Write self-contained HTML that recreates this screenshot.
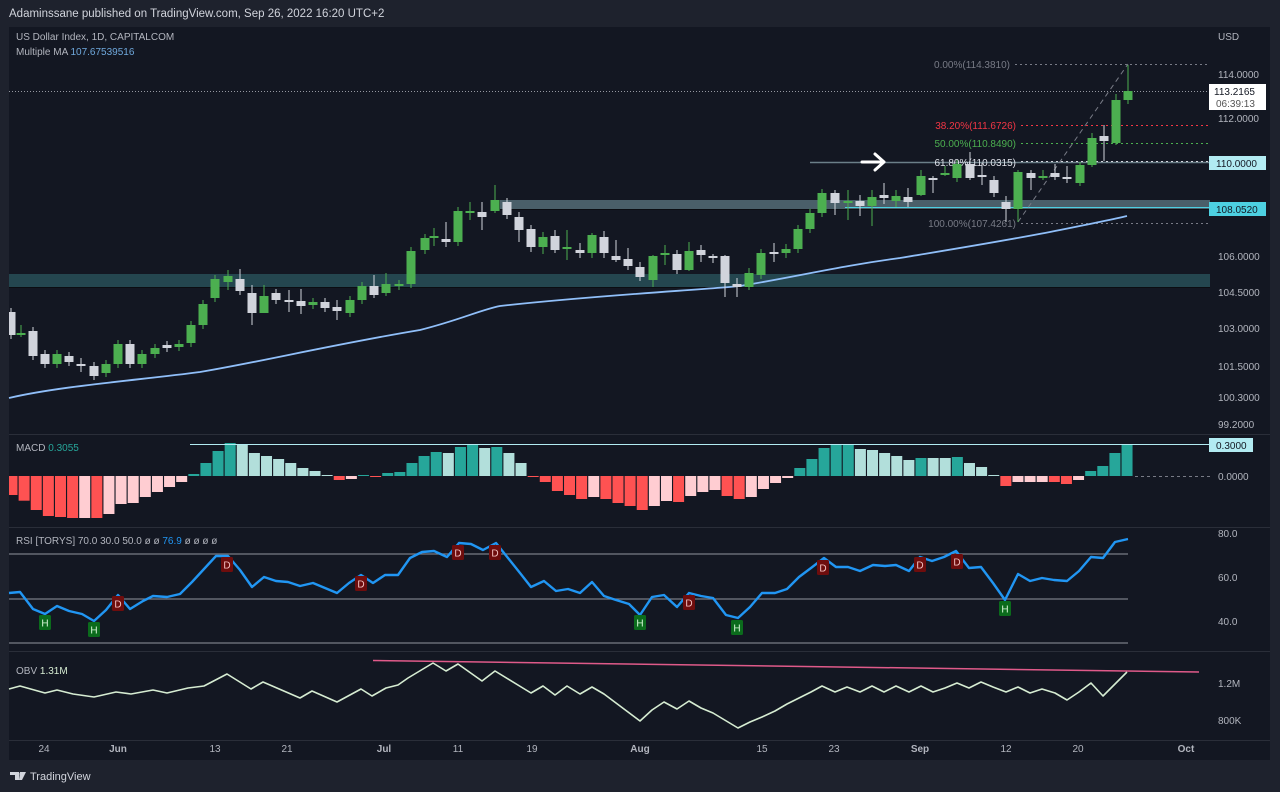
<!DOCTYPE html>
<html><head><meta charset="utf-8"><style>
html,body{margin:0;padding:0;background:#1e222d;width:1280px;height:792px;overflow:hidden;font-family:"Liberation Sans",sans-serif}
svg{position:absolute;left:0;top:0}
text{font-family:"Liberation Sans",sans-serif}
</style></head><body>
<svg id="s" width="1280" height="792" xmlns="http://www.w3.org/2000/svg">
<defs><clipPath id="cp"><rect x="9" y="27" width="1261" height="733"/></clipPath></defs>
<rect x="0" y="0" width="1280" height="792" fill="#1e222d"/>
<text x="9" y="17" font-size="11.5" fill="#d1d4dc">Adaminssane published on TradingView.com, Sep 26, 2022 16:20 UTC+2</text>
<rect x="9" y="27" width="1261" height="733" fill="#131722"/>
<g stroke="#2a2e39" stroke-width="1">
<line x1="9" y1="434.5" x2="1270" y2="434.5"/>
<line x1="9" y1="527.5" x2="1270" y2="527.5"/>
<line x1="9" y1="651.5" x2="1270" y2="651.5"/>
<line x1="9" y1="740.5" x2="1270" y2="740.5"/>
</g>
<rect x="9" y="274" width="1201" height="13" fill="#24464f"/>
<line x1="9" y1="287.5" x2="1210" y2="287.5" stroke="#0b0d12"/>
<rect x="500" y="200" width="710" height="9" fill="#4a5f69"/>
<line x1="500" y1="209.5" x2="1210" y2="209.5" stroke="#0b0d12"/>
<line x1="845" y1="207.5" x2="1210" y2="207.5" stroke="#4dd0e1" stroke-width="1"/>
<line x1="810" y1="162.5" x2="1210" y2="162.5" stroke="#6b7f88" stroke-width="1.5"/>
<line x1="9" y1="91.5" x2="1210" y2="91.5" stroke="#9598a1" stroke-dasharray="1 2"/>
<g stroke-dasharray="2 3" stroke-width="1">
<line x1="1015" y1="64.5" x2="1210" y2="64.5" stroke="#787b86"/>
<line x1="1021" y1="125.5" x2="1210" y2="125.5" stroke="#f23645"/>
<line x1="1021" y1="143.5" x2="1210" y2="143.5" stroke="#4caf50"/>
<line x1="1021" y1="161.5" x2="1210" y2="161.5" stroke="#d1d4dc"/>
<line x1="1021" y1="223.5" x2="1210" y2="223.5" stroke="#787b86"/>
<line x1="1018" y1="222" x2="1128" y2="64" stroke="#787b86" stroke-dasharray="5 4"/>
</g>
<g font-size="10" text-anchor="end">
<text x="1010" y="68" fill="#787b86">0.00%(114.3810)</text>
<text x="1016" y="129" fill="#f23645">38.20%(111.6726)</text>
<text x="1016" y="147" fill="#4caf50">50.00%(110.8490)</text>
<text x="1016" y="166" fill="#e0e3eb">61.80%(110.0315)</text>
<text x="1016" y="227" fill="#787b86">100.00%(107.4261)</text>
</g>
<path d="M862 162 H884 M875 154 L884 162 L875 170" stroke="#fff" stroke-width="3" fill="none" stroke-linecap="round" stroke-linejoin="round"/>
<path d="M9 398 C60 386 140 380 200 372 C260 362 330 345 420 330 C460 320 480 310 500 306 C600 295 700 290 740 286 C800 276 840 266 900 258 C960 248 1010 240 1060 230 C1090 224 1110 220 1127 216" stroke="#90bff9" stroke-width="1.8" fill="none"/>
<g id="candles" clip-path="url(#cp)"></g>
<g id="macd" clip-path="url(#cp)"></g>
<line x1="190" y1="444.5" x2="1210" y2="444.5" stroke="#b2ebf2" stroke-width="1"/>
<line x1="1135" y1="476.5" x2="1210" y2="476.5" stroke="#787b86" stroke-dasharray="3 3"/>
<g stroke="#787b86" stroke-width="1.2">
<line x1="9" y1="554" x2="1128" y2="554"/><line x1="9" y1="599" x2="1128" y2="599"/><line x1="9" y1="643" x2="1128" y2="643"/>
</g>
<path id="rsi" stroke="#2196f3" stroke-width="2.4" fill="none" stroke-linejoin="round"/>
<g id="marks"></g>
<line x1="373" y1="660.5" x2="1199" y2="672" stroke="#e05a8a" stroke-width="1.5"/>
<path id="obv" stroke="#d6ecd2" stroke-width="1.6" fill="none" stroke-linejoin="round"/>
<g font-size="10" fill="#b2b5be">
<text x="16" y="40">US Dollar Index, 1D, CAPITALCOM</text>
<text x="16" y="55">Multiple MA <tspan fill="#6fa8dc">107.67539516</tspan></text>
<text x="16" y="451">MACD <tspan fill="#26a69a">0.3055</tspan></text>
<text x="16" y="544">RSI [TORYS]  70.0  30.0  50.0  ø  ø  <tspan fill="#2196f3">76.9</tspan>  ø  ø  ø  ø</text>
<text x="16" y="674">OBV <tspan fill="#d6ecd2">1.31M</tspan></text>
</g>
<g font-size="10" fill="#b2b5be">
<text x="1218" y="40">USD</text>
<text x="1218" y="78">114.0000</text>
<text x="1218" y="122">112.0000</text>
<text x="1218" y="260">106.0000</text>
<text x="1218" y="296">104.5000</text>
<text x="1218" y="332">103.0000</text>
<text x="1218" y="370">101.5000</text>
<text x="1218" y="401">100.3000</text>
<text x="1218" y="428">99.2000</text>
<text x="1218" y="480">0.0000</text>
<text x="1218" y="537">80.0</text>
<text x="1218" y="581">60.0</text>
<text x="1218" y="625">40.0</text>
<text x="1218" y="687">1.2M</text>
<text x="1218" y="724">800K</text>
</g>
<rect x="1209" y="84" width="57" height="26" fill="#fff"/>
<text x="1214" y="95" font-size="10" fill="#131722">113.2165</text>
<text x="1216" y="107" font-size="10" fill="#555">06:39:13</text>
<rect x="1209" y="156" width="57" height="14" fill="#b2ebf2"/>
<text x="1216" y="167" font-size="10" fill="#131722">110.0000</text>
<rect x="1209" y="202" width="57" height="14" fill="#4dd0e1"/>
<text x="1216" y="213" font-size="10" fill="#131722">108.0520</text>
<rect x="1209" y="438" width="44" height="14" fill="#b2ebf2"/>
<text x="1216" y="449" font-size="10" fill="#131722">0.3000</text>
<g font-size="10" fill="#b2b5be" text-anchor="middle">
<text x="44" y="752">24</text><text x="118" y="752" font-weight="bold">Jun</text><text x="215" y="752">13</text><text x="287" y="752">21</text>
<text x="384" y="752" font-weight="bold">Jul</text><text x="458" y="752">11</text><text x="532" y="752">19</text><text x="640" y="752" font-weight="bold">Aug</text>
<text x="762" y="752">15</text><text x="834" y="752">23</text><text x="920" y="752" font-weight="bold">Sep</text><text x="1006" y="752">12</text>
<text x="1078" y="752">20</text><text x="1186" y="752" font-weight="bold">Oct</text>
</g>
<path d="M10 772 H19 V780 H15 V775 H10 Z M20 772 H26 L22 780 H19 Z" fill="#d1d4dc"/>
<circle cx="21" cy="774" r="1.6" fill="#d1d4dc"/>
<text x="30" y="780" font-size="11" fill="#d1d4dc">TradingView</text>
</svg>
<script>
var NS="http://www.w3.org/2000/svg";
function el(p,t,a){var e=document.createElementNS(NS,t);for(var k in a)e.setAttribute(k,a[k]);p.appendChild(e);return e;}
var G="#4caf50",W="#d1d4dc";
var C=[[11,312,335,W],[21,333,335,G,325,337],[33,331,356,W],[45,354,364,W],[57,354,364,G],[69,356,362,W],[81,364,366,W,358,372],[94,366,376,W],[106,364,373,G],[118,344,364,G],[130,344,364,W],[142,354,364,G],[155,348,354,G],[167,345,348,W],[179,344,347,G],[191,325,343,G],[203,304,325,G],[215,279,298,G],[228,276,282,G,270,290],[240,279,291,W,269,295],[252,293,313,W,285,325],[264,296,313,G,285,313],[276,293,300,W],[289,300,302,W,290,312],[301,301,306,W,289,314],[313,302,305,G],[325,302,308,W],[337,307,311,W,300,320],[350,300,313,G],[362,286,300,G],[374,286,295,W,275,298],[386,284,293,G,273,296],[399,284,286,G],[411,251,284,G],[425,238,250,G],[434,236,238,G,228,246],[446,239,242,W,222,247],[458,211,242,G],[470,211,213,G,202,220],[482,212,217,W,202,230],[495,200,211,G,185,213],[507,202,215,W],[519,217,230,W,212,242],[531,229,247,W,225,252],[543,237,247,G,232,254],[555,236,250,W,230,253],[567,247,249,G,230,260],[580,250,253,W,243,258],[592,235,253,G,233,258],[604,237,253,W,231,258],[616,256,260,W,240,262],[628,259,266,W,248,270],[640,267,277,W,262,281],[653,256,280,G,255,287],[665,253,255,G,245,265],[677,254,270,W],[689,251,270,G,242,271],[701,250,255,W,245,262],[713,256,258,W,254,263],[725,256,283,W,255,297],[737,284,287,W,278,297],[749,273,287,G,268,290],[761,253,275,G],[774,252,254,W,243,262],[786,249,253,G,244,258],[798,229,249,G],[810,213,229,G],[822,193,213,G],[835,193,203,W,190,215],[848,201,203,G,190,220],[860,201,206,W,195,216],[872,197,206,G,190,226],[884,195,198,W,183,204],[896,196,201,G,190,207],[908,197,202,W,188,207],[921,176,195,G,170,196],[933,178,180,W,176,193],[945,173,175,G,166,176],[957,164,178,G,160,182],[970,164,178,W,152,180],[982,175,177,W,163,185],[994,180,193,W],[1006,202,209,W,196,222],[1018,172,209,G,170,222],[1031,173,178,W,170,190],[1043,176,178,G,170,180],[1055,173,177,W,164,180],[1067,177,179,W,166,183],[1080,165,183,G,162,186],[1092,138,165,G,133,167],[1104,136,141,W,125,161],[1116,100,143,G,94,145],[1128,91,100,G,65,104]];
var cg=document.getElementById("candles");
C.forEach(function(c){var x=c[0],t=c[1],b=c[2],col=c[3],wt=c[4]||t-4,wb=c[5]||b+4;
el(cg,"line",{x1:x,x2:x,y1:wt,y2:wb,stroke:col,"stroke-width":1});
el(cg,"rect",{x:x-4.5,y:t,width:9,height:Math.max(b-t,1.5),fill:col});});
var R="#ff5252",P="#ffcdd2",T="#26a69a",L="#b2dfdb";
var M=[[495,R],[500.7,R],[510,R],[516,R],[517,R],[518,R],[518,P],[518,R],[514,P],[504,P],[503,P],[497,P],[492,P],[487,P],[482,P],[474,T],[463,T],[451,T],[443,T],[444,L],[453,L],[456,L],[459,L],[463,L],[468,L],[471,L],[475,L],[480,R],[479,P],[475,T],[477,R],[473,T],[472,T],[463,T],[456,T],[452,T],[453,L],[447,T],[445,T],[448,L],[447,T],[453,L],[463,L],[477,R],[482,R],[491,R],[495,R],[499,R],[497,P],[499,R],[503,R],[506,R],[510,R],[506,P],[501,P],[502,R],[496,P],[492,P],[490,P],[496,R],[499,R],[497,P],[489,P],[483,P],[478,P],[468,T],[459,T],[448,T],[445,T],[445,T],[449,L],[450,L],[453,L],[456,L],[460,L],[458,T],[458,L],[458,L],[457,T],[463,L],[467,L],[475,L],[486,R],[482,P],[482,P],[482,P],[482,R],[484,R],[480,P],[471,T],[466,T],[453,T],[444,T]];
var mg=document.getElementById("macd");
M.forEach(function(m,i){var x=12+12.12*i,y=m[0],z=476;var x0=Math.max(x-5.5,9);
el(mg,"rect",{x:x0,y:Math.min(y,z),width:x+5.5-x0,height:Math.max(Math.abs(y-z),1),fill:m[1]});});
var RS=[[9,593],[20,592],[33,609],[45,614],[57,606],[69,611],[82,614],[94,621],[106,610],[118,595],[130,609],[143,601],[153,596],[167,597],[180,594],[192,582],[204,569],[216,556],[228,556],[240,570],[252,587],[264,577],[276,581],[288,582],[300,586],[313,583],[325,588],[337,593],[349,583],[361,575],[373,583],[385,575],[398,575],[410,558],[422,552],[434,551],[447,557],[459,543],[471,544],[483,550],[496,543],[508,558],[520,573],[531,587],[544,581],[556,591],[568,589],[580,593],[592,582],[604,596],[616,600],[629,604],[640,615],[652,597],[664,595],[677,607],[689,593],[701,596],[713,598],[726,615],[738,618],[750,607],[762,593],[775,593],[787,589],[799,577],[811,568],[824,558],[836,567],[848,567],[860,571],[873,565],[885,566],[896,565],[909,571],[920,557],[932,561],[944,557],[956,551],[969,568],[981,567],[993,583],[1005,600],[1018,574],[1030,581],[1042,578],[1054,580],[1067,581],[1079,571],[1091,557],[1103,558],[1115,542],[1128,539]];
document.getElementById("rsi").setAttribute("d","M"+RS.map(function(p){return p.join(" ")}).join(" L"));
var MK=[[45,623,"H"],[94,630,"H"],[118,604,"D"],[227,565,"D"],[361,584,"D"],[458,553,"D"],[495,553,"D"],[640,623,"H"],[689,603,"D"],[737,628,"H"],[823,568,"D"],[920,565,"D"],[957,562,"D"],[1005,609,"H"]];
var kg=document.getElementById("marks");
MK.forEach(function(m){var c=m[2]=="H"?"#0b6b1c":"#6e0d0d";
el(kg,"rect",{x:m[0]-6,y:m[1]-8,width:12,height:15,rx:1.5,fill:c});
var t=el(kg,"text",{x:m[0],y:m[1]+3.5,"font-size":10,fill:m[2]=="H"?"#d7f5d7":"#f2c0c0","text-anchor":"middle"});t.textContent=m[2];});
var OB=[[9,689],[20,686],[45,693],[57,690],[73,694],[94,697],[116,692],[131,694],[153,690],[167,693],[188,688],[204,686],[227,674],[251,689],[263,682],[300,698],[312,691],[337,702],[361,689],[372,696],[386,688],[398,685],[408,678],[433,663],[446,671],[458,664],[482,681],[495,671],[531,693],[543,686],[555,695],[567,686],[580,694],[592,687],[604,694],[640,721],[652,710],[664,702],[677,709],[689,701],[701,708],[713,713],[738,728],[750,722],[762,717],[775,711],[787,704],[799,698],[811,692],[822,686],[835,692],[847,687],[860,692],[872,686],[884,692],[896,686],[909,692],[921,686],[933,692],[945,688],[957,683],[969,688],[981,682],[993,687],[1006,692],[1018,687],[1030,693],[1042,689],[1055,693],[1067,700],[1079,692],[1091,683],[1103,696],[1127,672]];
document.getElementById("obv").setAttribute("d","M"+OB.map(function(p){return p.join(" ")}).join(" L"));
</script>
</body></html>
